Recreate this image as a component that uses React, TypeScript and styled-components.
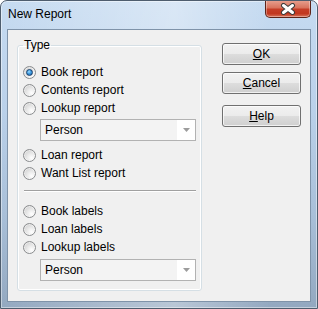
import styled, { createGlobalStyle } from "styled-components";

const GlobalStyle = createGlobalStyle`
  html, body {
    margin: 0;
    padding: 0;
    background: #ffffff;
  }
  body {
    font-family: "Liberation Sans", Arial, sans-serif;
    font-size: 12px;
    color: #000000;
  }
`

const Window = styled.div`
  width: 318px;
  height: 309px;
  box-sizing: border-box;
  display: flex;
  flex-direction: column;
  border: 1px solid #4e5d6e;
  border-radius: 7px 7px 0 0;
  overflow: hidden;
  background:
    linear-gradient(to right, rgba(255,255,255,0) 0%, rgba(255,255,255,0.35) 55%, rgba(255,255,255,0) 85%),
    linear-gradient(to bottom, #c6dbf1 0%, #bad1ea 35%, #a8bfd8 70%, #93a8c0 100%);
  box-shadow: inset 0 0 0 1px rgba(255,255,255,0.45);
`

const TitleBar = styled.div`
  height: 28px;
  display: flex;
  align-items: flex-start;
  justify-content: space-between;
`

const Title = styled.div`
  margin: 6px 0 0 7px;
  line-height: 15px;
  color: #000000;
`

const CloseButton = styled.div`
  width: 46px;
  height: 18px;
  margin-right: 6px;
  margin-top: -1px;
  box-sizing: border-box;
  border: 1px solid #5e2419;
  border-top: none;
  border-radius: 0 0 5px 5px;
  display: flex;
  align-items: center;
  justify-content: center;
  background: linear-gradient(to bottom, #e8a392 0%, #d9745e 45%, #c53d26 55%, #c2371f 80%, #d8735a 100%);
  box-shadow: inset 0 0 0 1px rgba(255,255,255,0.35);
`

const Client = styled.div`
  flex: 1;
  margin: 0 6px 6px 6px;
  border: 1px solid #7f93a9;
  background: #f0f0f0;
  display: flex;
  align-items: flex-start;
  padding: 8px 9px 0 9px;
  gap: 20px;
`

const GroupBox = styled.fieldset`
  width: 186px;
  box-sizing: border-box;
  margin: 0;
  padding: 10px 5px 9px 5px;
  min-inline-size: 0;
  border: 1px solid #d5dfe5;
  border-radius: 3px;
  box-shadow: inset 0 0 0 1px #ffffff;
  display: flex;
  flex-direction: column;
`

const Legend = styled.legend`
  padding: 0 1px;
  margin: 0;
  line-height: 15px;
`

const RadioRow = styled.label<{ $gap?: number }>`
  display: flex;
  align-items: center;
  height: 18px;
  gap: 5px;
  margin-top: ${(p) => p.$gap ?? 0}px;
  white-space: nowrap;
`

const Radio = styled.span<{ $checked?: boolean }>`
  position: relative;
  width: 13px;
  height: 13px;
  box-sizing: border-box;
  border-radius: 50%;
  border: 1px solid #8a8c8e;
  background: radial-gradient(circle at 68% 72%, #ffffff 0%, #ececec 35%, #c6c6c6 100%);
  box-shadow: inset 0 0 0 1px rgba(255,255,255,0.5);
  flex-shrink: 0;
  &::after {
    content: "";
    display: ${(p) => (p.$checked ? "block" : "none")};
    position: absolute;
    left: 2px;
    top: 2px;
    width: 7px;
    height: 7px;
    box-sizing: border-box;
    border-radius: 50%;
    border: 1px solid #173f6b;
    background: radial-gradient(circle at 40% 35%, #9fdcff 0%, #3d9ae0 45%, #1a5a9c 100%);
  }
`

const Combo = styled.div<{ $gap: number }>`
  margin: ${(p) => p.$gap}px 0 0 17px;
  width: 156px;
  height: 22px;
  box-sizing: border-box;
  border: 1px solid #b2b2b2;
  background: #f3f3f3;
  display: flex;
  align-items: stretch;
`

const ComboText = styled.div`
  flex: 1;
  padding-left: 4px;
  display: flex;
  align-items: center;
`

const ComboArrow = styled.div`
  width: 18px;
  background: #ffffff;
  display: flex;
  align-items: center;
  justify-content: center;
`

const Separator = styled.div`
  margin: 8px 0 0 1px;
  height: 0;
  border-top: 1px solid #a0a0a0;
  border-bottom: 1px solid #ffffff;
`

const ButtonColumn = styled.div`
  margin-top: 5px;
  display: flex;
  flex-direction: column;
`

const Button = styled.button<{ $gap?: number }>`
  width: 79px;
  height: 22px;
  margin-top: ${(p) => p.$gap ?? 0}px;
  padding: 0;
  box-sizing: border-box;
  border: 1px solid #707070;
  border-radius: 3px;
  font-family: "Liberation Sans", Arial, sans-serif;
  font-size: 12px;
  color: #000000;
  background: linear-gradient(to bottom, #f2f2f2 0%, #ebebeb 50%, #dddddd 51%, #cfcfcf 100%);
  box-shadow: inset 0 0 0 1px rgba(255,255,255,0.7);
`

function Arrow() {
  return (
    <svg width="7" height="4" viewBox="0 0 7 4">
      <path d="M0 0 L7 0 L3.5 4 Z" fill="#9c9c9c" />
    </svg>
  )
}

function CloseGlyph() {
  return (
    <svg width="16" height="12" viewBox="0 0 16 12">
      <path d="M3.5 2.5 L12.5 9.5 M12.5 2.5 L3.5 9.5" stroke="#3b3b3b" strokeWidth="5" strokeLinecap="round" />
      <path d="M3.5 2.5 L12.5 9.5 M12.5 2.5 L3.5 9.5" stroke="#ffffff" strokeWidth="3" strokeLinecap="round" />
    </svg>
  )
}

function ComboBox({ value, gap }: { value: string, gap: number }) {
  return (
    <Combo $gap={gap}>
      <ComboText>{value}</ComboText>
      <ComboArrow><Arrow /></ComboArrow>
    </Combo>
  )
}

function Option({ label, checked, gap }: { label: string, checked?: boolean, gap?: number }) {
  return (
    <RadioRow $gap={gap}>
      <Radio $checked={checked} />
      {label}
    </RadioRow>
  )
}

export default function App() {
  return (
    <>
      <GlobalStyle />
      <Window>
        <TitleBar>
          <Title>New Report</Title>
          <CloseButton><CloseGlyph /></CloseButton>
        </TitleBar>
        <Client>
          <GroupBox>
            <Legend>Type</Legend>
            <Option label="Book report" checked />
            <Option label="Contents report" />
            <Option label="Lookup report" />
            <ComboBox value="Person" gap={2} />
            <Option label="Loan report" gap={5} />
            <Option label="Want List report" />
            <Separator />
            <Option label="Book labels" gap={10} />
            <Option label="Loan labels" />
            <Option label="Lookup labels" />
            <ComboBox value="Person" gap={3} />
          </GroupBox>
          <ButtonColumn>
            <Button><u>O</u>K</Button>
            <Button $gap={7}><u>C</u>ancel</Button>
            <Button $gap={11}><u>H</u>elp</Button>
          </ButtonColumn>
        </Client>
      </Window>
    </>
  )
}
